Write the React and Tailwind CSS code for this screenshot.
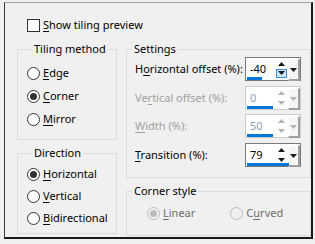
import React from "react";

function Label({ pre = "", u, post = "", className = "" }) {
  return (
    <span className={className}>
      {pre}
      <span className="underline underline-offset-2 decoration-1">{u}</span>
      {post}
    </span>
  );
}

function Radio({ checked, disabled, children, className = "" }) {
  const ring = disabled ? "border-[#bcbcbc] bg-[#f0f0f0]" : "border-[#333333] bg-white";
  const dot = disabled ? "bg-[#bcbcbc]" : "bg-[#333333]";
  return (
    <div className={"flex items-center h-[16px] " + className}>
      <div className={"w-[13px] h-[13px] rounded-full border flex items-center justify-center " + ring}>
        {checked && <div className={"w-[7px] h-[7px] rounded-full " + dot} />}
      </div>
      <div className={"ml-[3px] " + (disabled ? "text-[#6d6d6d]" : "text-black")}>{children}</div>
    </div>
  );
}

function Group({ title, className = "", children }) {
  return (
    <fieldset className={"border border-[#dcdcdc] rounded-none " + className}>
      <legend className="ml-[5px] px-[2px] leading-[14px] text-black">{title}</legend>
      {children}
    </fieldset>
  );
}

function Arrow({ up, color }) {
  return (
    <svg width="7" height="4" viewBox="0 0 7 4">
      {up ? <path d="M3.5 0 L7 4 L0 4 Z" fill={color} /> : <path d="M0 0 L7 0 L3.5 4 Z" fill={color} />}
    </svg>
  );
}

function Spin({ value, barClass, disabled, active }) {
  const border = disabled ? "border-[#cccccc]" : "border-[#7a7a7a]";
  const txt = disabled ? "text-[#8ca0b8]" : "text-black";
  const arrowColor = disabled ? "#b4b4b4" : "#1a1a1a";
  return (
    <div className={"relative flex w-[56px] h-[24px] border bg-white " + border}>
      <div className="w-[31px] h-full">
        <span className={"block ml-[4px] mt-[4px] leading-[14px] " + txt}>{value}</span>
      </div>
      <div className="flex flex-col w-[11px] h-full py-[2px] gap-[1px]">
        <div className="flex-1 flex items-center justify-center">
          <Arrow up color={arrowColor} />
        </div>
        <div
          className={
            "flex-1 flex items-center justify-center " +
            (active ? "bg-[#cce4f7] border border-[#3c8ed8]" : "")
          }
        >
          <Arrow color={arrowColor} />
        </div>
      </div>
      <div className="w-[12px] h-full flex items-center justify-center ml-[1px] my-[1px] bg-[#f6f6f6] border-r-2 border-b-2 border-[#a0a0a0] border-l border-t border-l-white border-t-white">
        <Arrow color={arrowColor} />
      </div>
      <div className={"absolute left-[1px] bottom-[0px] h-[3px] bg-[#0078d7] " + barClass} />
    </div>
  );
}

function Row({ label, disabled, children, className = "" }) {
  return (
    <div className={"flex items-center justify-between pl-[8px] pr-[9px] h-[24px] " + className}>
      <div className={disabled ? "text-[#a0a0a0]" : "text-black"}>{label}</div>
      {children}
    </div>
  );
}

export default function App() {
  return (
    <div className="w-[315px] h-[244px] bg-[#f0f0f0] pt-[2px] pl-[4px] font-['Segoe_UI','Noto_Sans',sans-serif] text-[11px] leading-[14px] text-black overflow-hidden">
      <div className="w-[309px] h-[237px] border border-t-[#a0a0a0] border-l-[#3a3a3a] border-r-2 border-b-2 border-r-[#1a1a1a] border-b-[#1a1a1a] bg-[#f0f0f0]">
        <div className="flex items-center mt-[14px] ml-[22px] h-[16px]">
          <div className="w-[13px] h-[13px] border border-[#333333] bg-white" />
          <Label className="ml-[3px]" u="S" post="how tiling preview" />
        </div>
        <div className="flex mt-[9px] ml-[12px]">
          <div className="flex flex-col w-[100px]">
            <Group title="Tiling method" className="h-[98px] pl-[9px]">
              <Radio className="mt-[9px]"><Label u="E" post="dge" /></Radio>
              <Radio className="mt-[7px]" checked><Label u="C" post="orner" /></Radio>
              <Radio className="mt-[7px]"><Label u="M" post="irror" /></Radio>
            </Group>
            <Group title="Direction" className="h-[88px] mt-[6px] pl-[9px]">
              <Radio className="mt-[6px]" checked><Label u="H" post="orizontal" /></Radio>
              <Radio className="mt-[6px]"><Label u="V" post="ertical" /></Radio>
              <Radio className="mt-[6px]"><Label u="B" post="idirectional" /></Radio>
            </Group>
          </div>
          <div className="flex flex-col w-[185px] ml-[9px]">
            <Group title="Settings" className="h-[136px]">
              <Row className="mt-[1px]" label={<Label pre="H" u="o" post="rizontal offset (%):" />}>
                <Spin value="-40" barClass="w-[15px]" active />
              </Row>
              <Row className="mt-[5px]" disabled label={<Label pre="Ve" u="r" post="tical offset (%):" />}>
                <Spin value="0" barClass="w-[26px]" disabled />
              </Row>
              <Row className="mt-[4px]" disabled label={<Label u="W" post="idth (%):" />}>
                <Spin value="50" barClass="w-[26px]" disabled />
              </Row>
              <Row className="mt-[5px]" label={<Label u="T" post="ransition (%):" />}>
                <Spin value="79" barClass="w-[42px]" />
              </Row>
            </Group>
            <Group title="Corner style" className="h-[52px] mt-[6px]">
              <div className="flex mt-[7px] ml-[20px]">
                <Radio checked disabled><Label u="L" post="inear" /></Radio>
                <Radio disabled className="ml-[35px]"><Label pre="C" u="u" post="rved" /></Radio>
              </div>
            </Group>
          </div>
        </div>
      </div>
    </div>
  );
}
